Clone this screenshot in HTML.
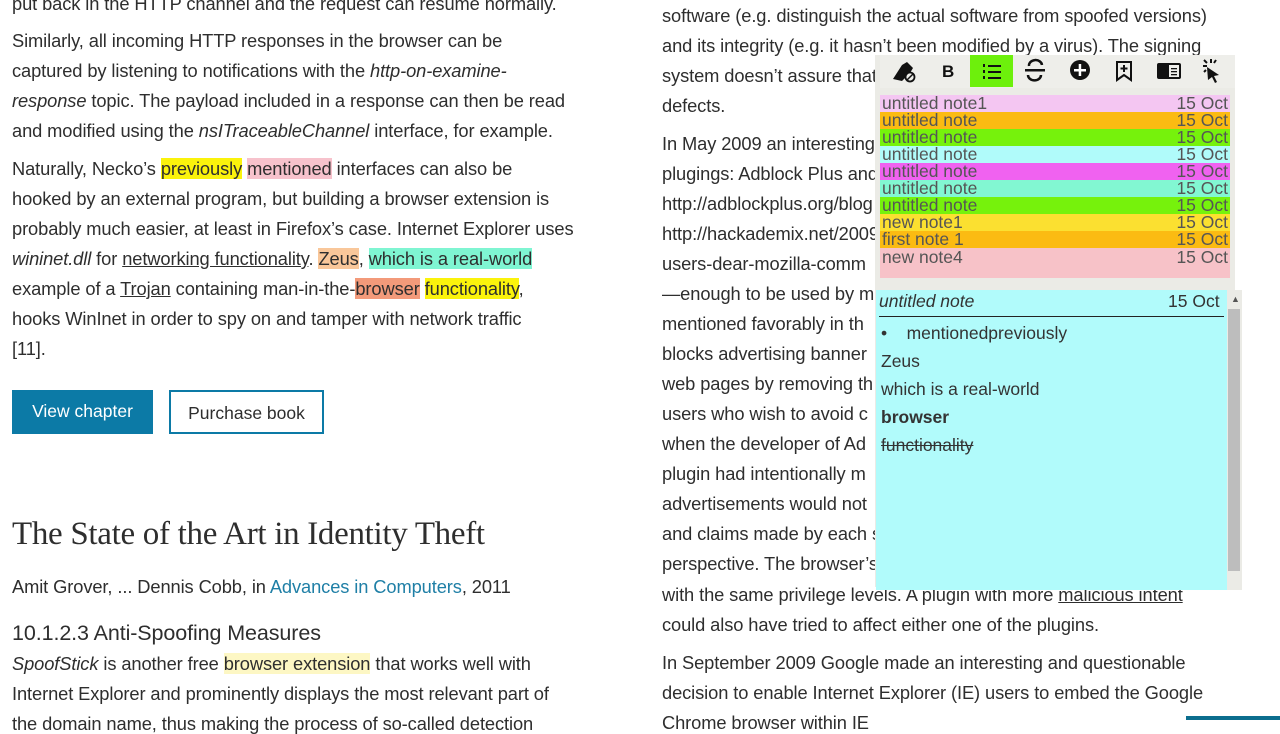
<!DOCTYPE html>
<html><head><meta charset="utf-8"><style>
*{margin:0;padding:0;box-sizing:border-box}
body{width:1280px;height:720px;overflow:hidden;background:#fff;font-family:"Liberation Sans",sans-serif;color:#2e2e2e;position:relative}
.l{position:absolute;white-space:nowrap;font-size:18.3px;line-height:20px;letter-spacing:-0.1px}
.y{background:#fbf30c}.p{background:#f7c2cc}.o{background:#f9c79a}.a{background:#7ff5d2}.s{background:#f39a7a}.ly{background:#fdf7c4}
u{text-decoration:underline}
.btn{position:absolute;top:390px;height:44px;font-size:17.5px;line-height:42px;text-align:center}
.row{position:absolute;left:880px;width:350px;overflow:hidden;font-size:17.5px;color:#555}
.row span{position:absolute;left:2px}.row b{position:absolute;right:2px;font-weight:normal}
</style></head><body>
<div class="l" style="left:12px;top:-6px">put back in the HTTP channel and the request can resume normally.</div>
<div class="l" style="left:12px;top:31px">Similarly, all incoming HTTP responses in the browser can be</div>
<div class="l" style="left:12px;top:61px">captured by listening to notifications with the <i>http-on-examine-</i></div>
<div class="l" style="left:12px;top:91px"><i>response</i> topic. The payload included in a response can then be read</div>
<div class="l" style="left:12px;top:121px">and modified using the <i>nsITraceableChannel</i> interface, for example.</div>
<div class="l" style="left:12px;top:159px">Naturally, Necko’s <span class="y">previously</span> <span class="p">mentioned</span> interfaces can also be</div>
<div class="l" style="left:12px;top:189px">hooked by an external program, but building a browser extension is</div>
<div class="l" style="left:12px;top:219px">probably much easier, at least in Firefox’s case. Internet Explorer uses</div>
<div class="l" style="left:12px;top:249px"><i>wininet.dll</i> for <u>networking functionality</u>. <span class="o">Zeus</span>, <span class="a">which is a real-world</span></div>
<div class="l" style="left:12px;top:279px">example of a <u>Trojan</u> containing man-in-the-<span class="s">browser</span> <span class="y">functionality</span>,</div>
<div class="l" style="left:12px;top:309px">hooks WinInet in order to spy on and tamper with network traffic</div>
<div class="l" style="left:12px;top:339px">[11].</div>
<div class="btn" style="left:12px;width:141px;background:#0c7aa6;color:#fff">View chapter</div>
<div class="btn" style="left:169px;width:155px;border:2px solid #0c7aa6;color:#2e2e2e">Purchase book</div>
<div class="l" style="left:12px;top:515px;font-family:'Liberation Serif',serif;font-size:33px;line-height:38px;letter-spacing:-0.3px">The State of the Art in Identity Theft</div>
<div class="l" style="left:12px;top:577px">Amit Grover, ... Dennis Cobb, in <span style="color:#1f7fa6">Advances in Computers</span>, 2011</div>
<div class="l" style="left:12px;top:621px;font-size:21.5px;line-height:24px">10.1.2.3 Anti-Spoofing Measures</div>
<div class="l" style="left:12px;top:654px"><i>SpoofStick</i> is another free <span class="ly">browser extension</span> that works well with</div>
<div class="l" style="left:12px;top:684px">Internet Explorer and prominently displays the most relevant part of</div>
<div class="l" style="left:12px;top:714px">the domain name, thus making the process of so-called detection</div>

<div class="l" style="left:662px;top:6px">software (e.g. distinguish the actual software from spoofed versions)</div>
<div class="l" style="left:662px;top:36px">and its integrity (e.g. it hasn’t been modified by a virus). The signing</div>
<div class="l" style="left:662px;top:66px">system doesn’t assure that</div>
<div class="l" style="left:662px;top:96px">defects.</div>
<div class="l" style="left:662px;top:134px">In May 2009 an interesting</div>
<div class="l" style="left:662px;top:164px">plugings: Adblock Plus and</div>
<div class="l" style="left:662px;top:194px">http://adblockplus.org/blog</div>
<div class="l" style="left:662px;top:224px">http://hackademix.net/2009</div>
<div class="l" style="left:662px;top:254px">users-dear-mozilla-comm</div>
<div class="l" style="left:662px;top:284px">—enough to be used by m</div>
<div class="l" style="left:662px;top:314px">mentioned favorably in th</div>
<div class="l" style="left:662px;top:344px">blocks advertising banner</div>
<div class="l" style="left:662px;top:374px">web pages by removing th</div>
<div class="l" style="left:662px;top:404px">users who wish to avoid c</div>
<div class="l" style="left:662px;top:434px">when the developer of Ad</div>
<div class="l" style="left:662px;top:464px">plugin had intentionally m</div>
<div class="l" style="left:662px;top:494px">advertisements would not</div>
<div class="l" style="left:662px;top:524px">and claims made by each s</div>
<div class="l" style="left:662px;top:554px">perspective. The browser’s</div>
<div class="l" style="left:662px;top:585px">with the same privilege levels. A plugin with more <u>malicious intent</u></div>
<div class="l" style="left:662px;top:615px">could also have tried to affect either one of the plugins.</div>
<div class="l" style="left:662px;top:653px">In September 2009 Google made an interesting and questionable</div>
<div class="l" style="left:662px;top:683px">decision to enable Internet Explorer (IE) users to embed the Google</div>
<div class="l" style="left:662px;top:713px">Chrome browser within IE</div>
<div style="position:absolute;left:1186px;top:716px;width:94px;height:4px;background:#0c6e8e"></div>

<!-- notes panel -->
<div style="position:absolute;left:875px;top:55px;width:360px;height:532px;background:#ebebe6"></div>
<div style="position:absolute;left:880px;top:55px;width:355px;height:33px;background:#eeeeea"></div>
<div style="position:absolute;left:970px;top:55px;width:43px;height:32px;background:#6df00c"></div>
<svg style="position:absolute;left:880px;top:55px" width="355" height="33" viewBox="0 0 355 33">
 <g fill="#111">
  <path d="M13 24 L22 10 L27 7 L33 13 L30 18 L22 26 Z"/><circle cx="30" cy="22" r="4.5" fill="#eeeeea" stroke="#111" stroke-width="1.8"/><path d="M27 25 L33 19" stroke="#111" stroke-width="1.5"/>
  <text x="62" y="22" font-family="Liberation Sans" font-weight="bold" font-size="17">B</text>
  <rect x="103" y="9" width="2" height="3"/><rect x="103" y="15" width="2" height="3"/><rect x="103" y="21" width="2" height="3"/>
  <rect x="108" y="10" width="13" height="2"/><rect x="108" y="16" width="13" height="2"/><rect x="108" y="22" width="13" height="2"/>
  <rect x="145" y="14" width="20" height="2.5"/><path d="M162 10 A6 5 0 0 0 149 11 M148 20 A6 5 0 0 0 161 20" fill="none" stroke="#111" stroke-width="2.5"/>
  <circle cx="200" cy="15" r="10"/><rect x="194" y="14" width="12" height="2.5" fill="#fff"/><rect x="198.7" y="9" width="2.5" height="12" fill="#fff"/>
  <path d="M237 7 H251 V25 L244 20 L237 25 Z" fill="none" stroke="#111" stroke-width="2"/><rect x="243" y="10" width="2" height="7"/><rect x="240.5" y="12.5" width="7" height="2"/>
  <rect x="277" y="8" width="24" height="16" rx="2"/><rect x="289" y="10" width="10" height="12" fill="#eeeeea"/><rect x="291" y="13" width="6" height="1.3"/><rect x="291" y="16" width="6" height="1.3"/><rect x="291" y="19" width="6" height="1.3"/>
  <path d="M327 12 L339 20 L334 21 L337 27 L335 28 L332 22 L328 25 Z"/><rect x="330" y="4" width="2" height="4"/><rect x="323" y="10" width="4" height="2"/><path d="M324 5 L327 8 M336 5 L334 8 M324 17 L326 15" stroke="#111" stroke-width="2"/>
 </g>
</svg>
<div class="row" style="top:95px;height:17px;background:#f4c6f2"><span style="top:-2px">untitled note1</span><b style="top:-2px">15 Oct</b></div>
<div class="row" style="top:112px;height:17px;background:#fbbb12"><span style="top:-2px">untitled note</span><b style="top:-2px">15 Oct</b></div>
<div class="row" style="top:129px;height:17px;background:#76f20c"><span style="top:-2px">untitled note</span><b style="top:-2px">15 Oct</b></div>
<div class="row" style="top:146px;height:17px;background:#b0fbfa"><span style="top:-2px">untitled note</span><b style="top:-2px">15 Oct</b></div>
<div class="row" style="top:163px;height:17px;background:#f062f0"><span style="top:-2px">untitled note</span><b style="top:-2px">15 Oct</b></div>
<div class="row" style="top:180px;height:17px;background:#82f7d2"><span style="top:-2px">untitled note</span><b style="top:-2px">15 Oct</b></div>
<div class="row" style="top:197px;height:17px;background:#76f20c"><span style="top:-2px">untitled note</span><b style="top:-2px">15 Oct</b></div>
<div class="row" style="top:214px;height:17px;background:#fbe030"><span style="top:-2px">new note1</span><b style="top:-2px">15 Oct</b></div>
<div class="row" style="top:231px;height:17px;background:#fbbb12"><span style="top:-2px">first note 1</span><b style="top:-2px">15 Oct</b></div>
<div class="row" style="top:248px;height:30px;background:#f7c2c8"><span style="top:-1px">new note4</span><b style="top:-1px">15 Oct</b></div>

<div style="position:absolute;left:876px;top:290px;width:351px;height:300px;background:#b1fbfb"></div>
<div style="position:absolute;left:1227px;top:290px;width:15px;height:300px;background:#ebebe6"></div>
<div style="position:absolute;left:1228px;top:309px;width:12px;height:262px;background:#bdbdbd"></div>
<div style="position:absolute;left:1231px;top:294px;font-size:9px;color:#555">▲</div>
<div style="position:absolute;left:879px;top:291px;font-size:17.5px;color:#333"><i>untitled note</i></div>
<div style="position:absolute;left:1168px;top:291px;font-size:17.5px;color:#333">15 Oct</div>
<div style="position:absolute;left:879px;top:316px;width:345px;height:1px;background:#222"></div>
<div style="position:absolute;left:881px;top:319px;font-size:17.5px;line-height:28px;color:#333">
<div>•&nbsp;&nbsp;&nbsp;&nbsp;mentionedpreviously</div><div>Zeus</div><div>which is a real-world</div><div><b>browser</b></div><div><s>functionality</s></div></div>
</body></html>
